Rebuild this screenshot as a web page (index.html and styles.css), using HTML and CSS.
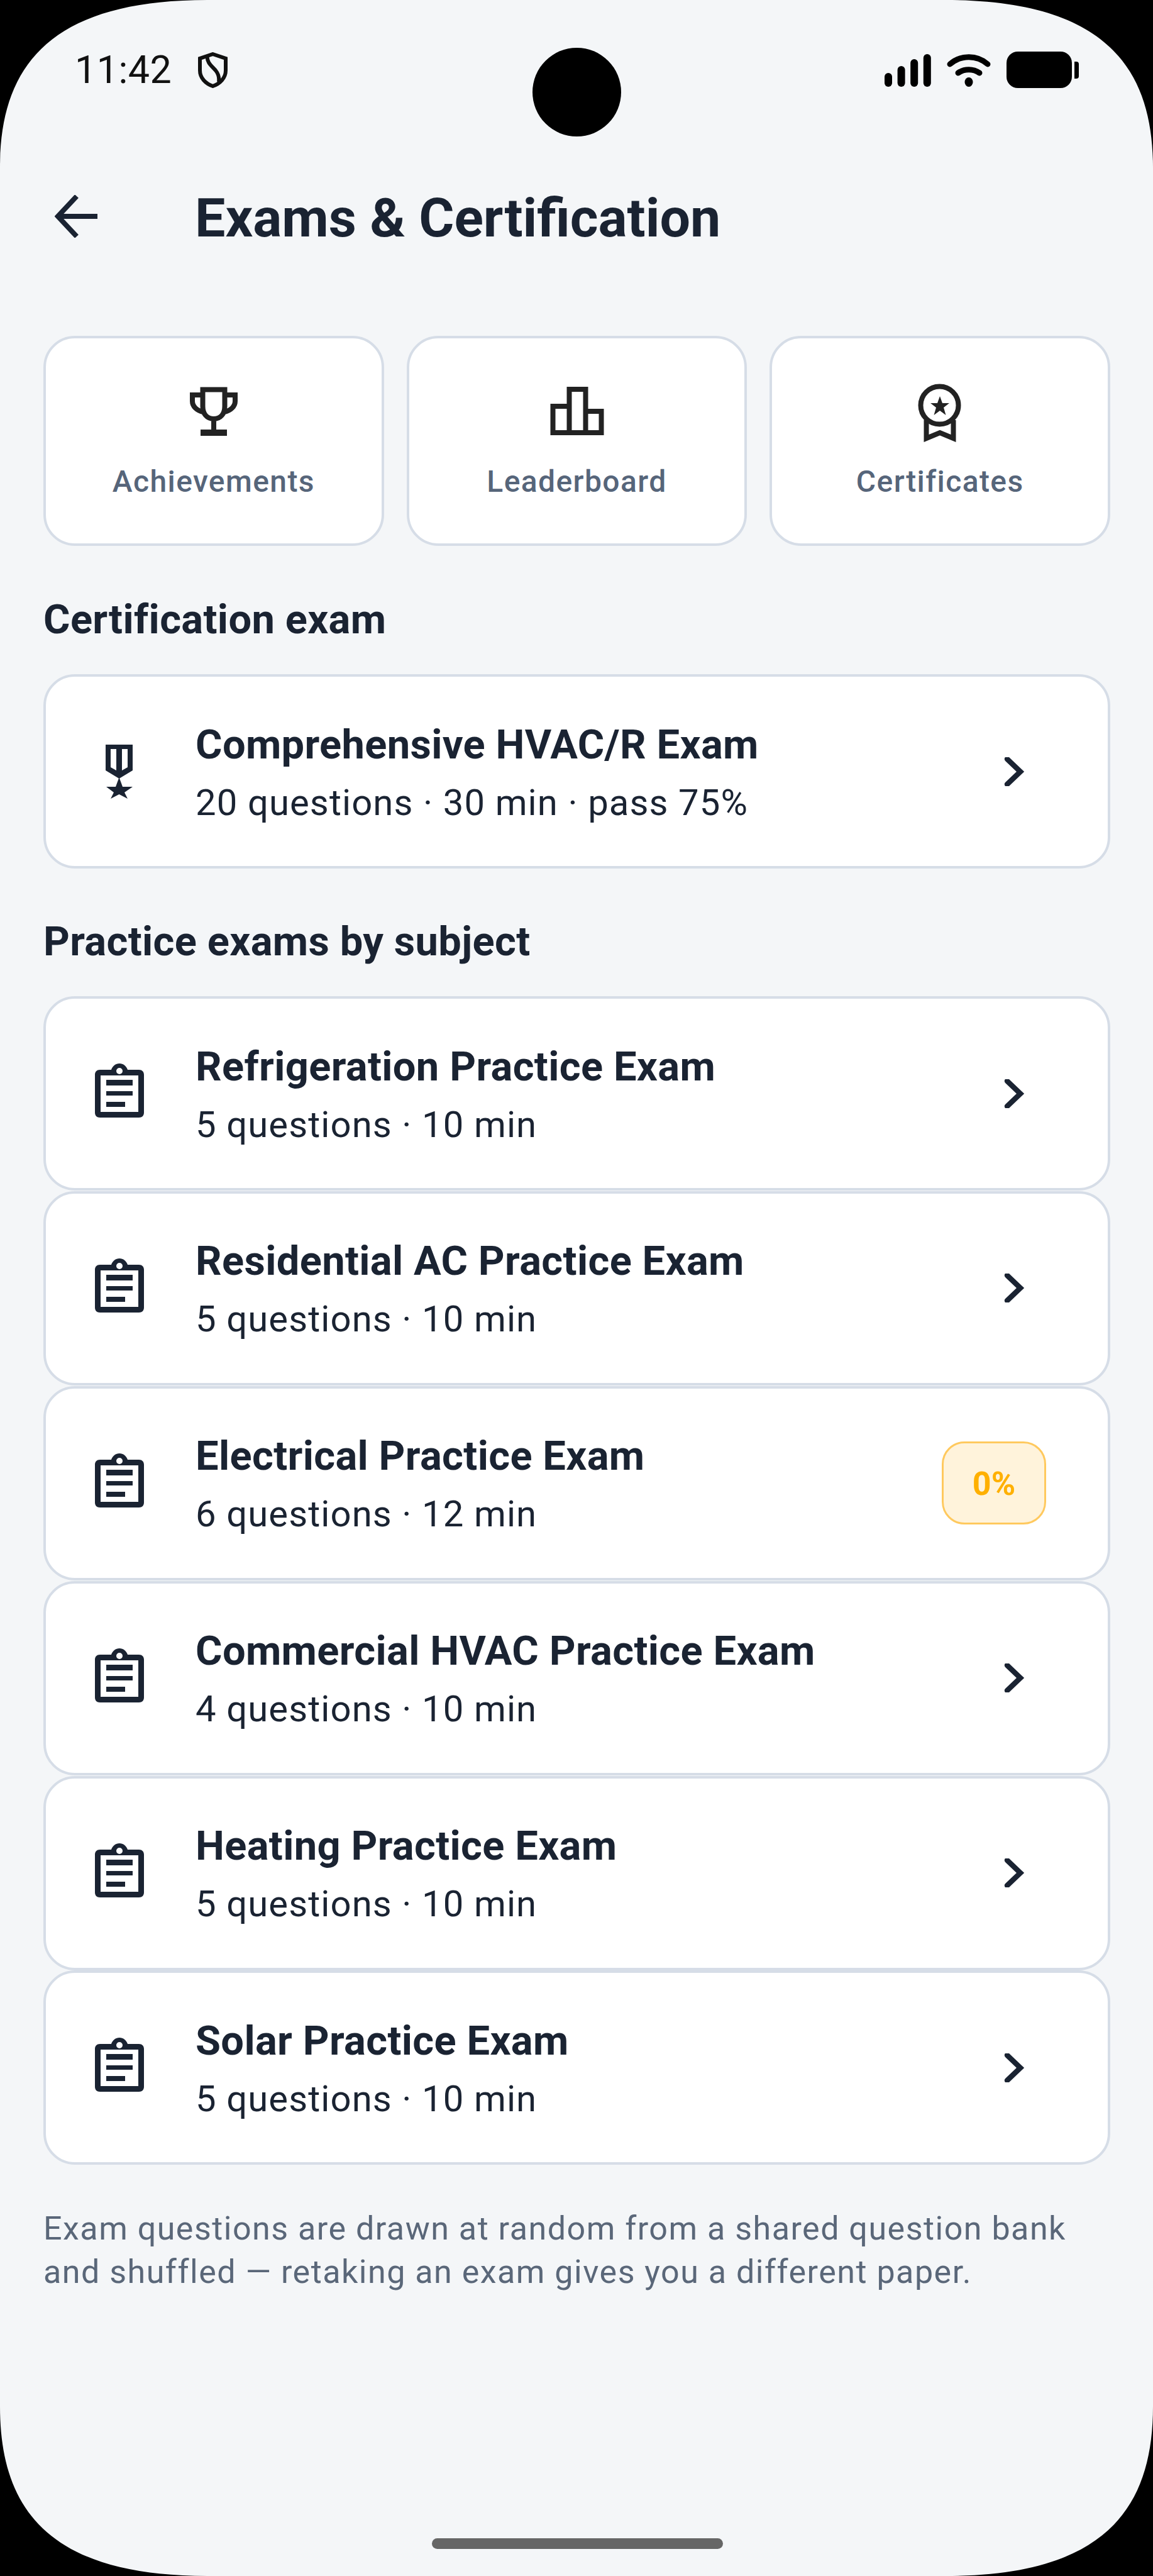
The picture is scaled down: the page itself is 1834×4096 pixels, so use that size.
FILE: index.html
```html
<!DOCTYPE html>
<html lang="en">
<head>
  <meta charset="UTF-8" />
  <title>Exams &amp; Certification</title>
  <link rel="stylesheet" href="styles.css">
</head>
<body>

<svg width="0" height="0" class="defs">
  <symbol id="clip" viewBox="0 0 78 86">
    <path fill-rule="evenodd" d="M8 10H26C28 4 33 0 39 0S50 4 52 10H70C75 10 78 13 78 18V78C78 83 75 86 70 86H8C3 86 0 83 0 78V18C0 13 3 10 8 10ZM9 19V77H69V19ZM39 7A5 5 0 1 0 39 17A5 5 0 1 0 39 7Z"/>
    <rect x="18" y="26" width="42" height="9"/>
    <rect x="18" y="44" width="42" height="7"/>
    <rect x="18" y="61" width="30" height="8"/>
  </symbol>
  <symbol id="chev" viewBox="0 0 34 46">
    <path d="M6 3L27 23L6 43" fill="none" stroke="currentColor" stroke-width="8.500" stroke-linecap="round"/>
  </symbol>
</svg>

<div class="screen">
  <div class="status">
    <div class="status-left">
      <span class="time">11:42</span>
      <svg class="shield" viewBox="0 0 47 57"><path d="M23.500 3L44 10V29C44 41 35 50 23.500 54C12 50 3 41 3 29V10Z M15 5C13 16 22 22 28 29C32 34 34 40 33 47" fill="none" stroke="#111" stroke-width="6"/></svg>
    </div>
    <div class="status-right">
      <svg class="signal" viewBox="0 0 74 52">
        <rect x="0" y="30" width="12" height="22" rx="6"/>
        <rect x="20.600" y="19" width="12" height="33" rx="6"/>
        <rect x="41.200" y="8" width="12" height="44" rx="6"/>
        <rect x="61.800" y="0" width="12" height="52" rx="6"/>
      </svg>
      <svg class="wifi" viewBox="0 0 70 53">
        <path d="M5 17C22 2 48 2 65 17" fill="none" stroke="#000" stroke-width="9" stroke-linecap="round"/>
        <path d="M18 31C28 24 42 24 52 31" fill="none" stroke="#000" stroke-width="9" stroke-linecap="round"/>
        <ellipse cx="35" cy="45.500" rx="6.500" ry="7.500"/>
      </svg>
      <div class="battery"></div>
      <div class="battery-tip"></div>
    </div>
  </div>

  <div class="topbar">
    <svg class="back" viewBox="0 0 68 68"><path d="M68 34H6M35 2L5 34L35 66" fill="none" stroke="#1a2332" stroke-width="8"/></svg>
    <h1>Exams &amp; Certification</h1>
  </div>

  <div class="chips">
    <div class="chip">
      <svg class="chip-icon" viewBox="0 0 96 96"><path d="M30.500 11.500H65.500V38C65.500 50 59 58 48 58S30.500 50 30.500 38ZM30 20H14V30C14 38 21 45 31 47M66 20H82V30C82 38 75 45 65 47M48 58V80" fill="none" stroke="#222" stroke-width="8"/><path d="M27 80H69" fill="none" stroke="#222" stroke-width="10"/></svg>
      <span>Achievements</span>
    </div>
    <div class="chip">
      <svg class="chip-icon" viewBox="0 0 96 96"><path d="M10.500 80V38H36.500V80ZM36.500 80V11H62.500V80ZM62.500 80V46H87.500V80Z" fill="none" stroke="#222" stroke-width="8"/></svg>
      <span>Leaderboard</span>
    </div>
    <div class="chip">
      <svg class="chip-icon" viewBox="0 0 96 96"><circle cx="47.500" cy="36.500" r="30" fill="none" stroke="#222" stroke-width="8"/><path d="M48 22L52 33H63L54 40L57.500 52L48 45L38.500 52L42 40L33 33H44Z" fill="#222"/><path d="M26.500 60V89L48 80L69.500 89V60" fill="none" stroke="#222" stroke-width="8"/></svg>
      <span>Certificates</span>
    </div>
  </div>

  <h2 class="sec-cert">Certification exam</h2>
  <div class="card">
    <div class="card-icon">
      <svg class="medal" viewBox="0 0 43 86"><path fill-rule="evenodd" d="M0 0H43V41L21.500 54L0 41ZM8 7V36L17 41V7ZM26 7V41L35 36V7Z"/><path d="M21.500 52L27 67H43L30 76L35 86L21.500 79L8 86L13 76L1 67H16Z"/></svg>
    </div>
    <div class="card-text">
      <div class="card-title">Comprehensive HVAC/R Exam</div>
      <div class="card-sub">20 questions · 30 min · pass 75%</div>
    </div>
    <svg class="chevron"><use href="#chev"/></svg>
  </div>

  <h2 class="sec-practice">Practice exams by subject</h2>
  <div class="list">
    <div class="card">
      <div class="card-icon"><svg class="clipboard"><use href="#clip"/></svg></div>
      <div class="card-text">
        <div class="card-title">Refrigeration Practice Exam</div>
        <div class="card-sub">5 questions · 10 min</div>
      </div>
      <svg class="chevron"><use href="#chev"/></svg>
    </div>
    <div class="card">
      <div class="card-icon"><svg class="clipboard"><use href="#clip"/></svg></div>
      <div class="card-text">
        <div class="card-title">Residential AC Practice Exam</div>
        <div class="card-sub">5 questions · 10 min</div>
      </div>
      <svg class="chevron"><use href="#chev"/></svg>
    </div>
    <div class="card">
      <div class="card-icon"><svg class="clipboard"><use href="#clip"/></svg></div>
      <div class="card-text">
        <div class="card-title">Electrical Practice Exam</div>
        <div class="card-sub">6 questions · 12 min</div>
      </div>
      <div class="badge">0%</div>
    </div>
    <div class="card">
      <div class="card-icon"><svg class="clipboard"><use href="#clip"/></svg></div>
      <div class="card-text">
        <div class="card-title">Commercial HVAC Practice Exam</div>
        <div class="card-sub">4 questions · 10 min</div>
      </div>
      <svg class="chevron"><use href="#chev"/></svg>
    </div>
    <div class="card">
      <div class="card-icon"><svg class="clipboard"><use href="#clip"/></svg></div>
      <div class="card-text">
        <div class="card-title">Heating Practice Exam</div>
        <div class="card-sub">5 questions · 10 min</div>
      </div>
      <svg class="chevron"><use href="#chev"/></svg>
    </div>
    <div class="card">
      <div class="card-icon"><svg class="clipboard"><use href="#clip"/></svg></div>
      <div class="card-text">
        <div class="card-title">Solar Practice Exam</div>
        <div class="card-sub">5 questions · 10 min</div>
      </div>
      <svg class="chevron"><use href="#chev"/></svg>
    </div>
  </div>

  <p class="note">Exam questions are drawn at random from a shared question bank and shuffled — retaking an exam gives you a different paper.</p>

  <div class="home-bar"></div>

  <!-- things that sit on top of the page -->
  <div class="camera"></div>
  <svg class="corners" viewBox="0 0 1834 4096">
    <path d="M0 0H330C77 0 0 107 0 267Z"/>
    <path d="M1834 0H1504C1757 0 1834 107 1834 267Z"/>
    <path d="M0 4096H330C77 4096 0 3989 0 3826Z"/>
    <path d="M1834 4096H1504C1757 4096 1834 3989 1834 3826Z"/>
  </svg>
</div>

</body>
</html>
```

FILE: styles.css
```css
body {
  margin: 0;
  background: #000;
  font-family: Roboto, sans-serif;
  color: #1a2332;
}
.defs {
  position: absolute;
}
.screen {
  position: relative;
  width: 1834px;
  height: 4096px;
  overflow: hidden;
  background: #f4f6f8;
  padding: 0 68px 0 69px;
  box-sizing: border-box;
}
.status {
  display: flex;
  justify-content: space-between;
  align-items: flex-start;
  margin: 0 50px 0 50px;
  padding-top: 82px;
  height: 170px;
  box-sizing: border-box;
}
.status-left {
  display: flex;
  align-items: center;
  gap: 42px;
}
.time {
  font-size: 61px;
  line-height: 58px;
  color: #111;
  letter-spacing: 0.5px;
}
.shield {
  width: 47px;
  height: 57px;
}
.status-right {
  display: flex;
  align-items: flex-start;
}
.signal {
  width: 74px;
  height: 52px;
  margin-top: 4px;
}
.wifi {
  width: 70px;
  height: 53px;
  margin: 3px 25px 0;
}
.battery {
  width: 104px;
  height: 58px;
  border-radius: 18px;
  background: #000;
}
.battery-tip {
  width: 7px;
  height: 27px;
  margin: 16px 0 0 4px;
  border-radius: 0 4px 4px 0;
  background: #000;
}
.topbar {
  display: flex;
  align-items: center;
  margin-top: 140px;
  height: 68px;
}
.back {
  width: 68px;
  height: 68px;
  margin: 0 155px 0 18px;
}
h1 {
  margin: 5px 0 0;
  font-size: 86px;
  line-height: 68px;
  font-weight: 700;
  color: #1a2332;
}
.chips {
  display: grid;
  grid-template-columns: repeat(3, 1fr);
  gap: 36px;
  margin-top: 156px;
}
.chip {
  height: 334px;
  box-sizing: border-box;
  background: #fff;
  border: 4px solid #d6dde7;
  border-radius: 50px;
  display: flex;
  flex-direction: column;
  align-items: center;
  padding-top: 70px;
}
.chip-icon {
  width: 96px;
  height: 96px;
}
.chip span {
  margin-top: 34px;
  font-size: 48px;
  line-height: 56px;
  font-weight: 500;
  letter-spacing: 1.4px;
  color: #56657a;
}
h2 {
  margin: 0;
  font-size: 65px;
  line-height: 74px;
  font-weight: 700;
  letter-spacing: 0.35px;
  color: #1a2332;
}
.sec-cert {
  margin-top: 80px;
  margin-bottom: 50px;
}
.sec-practice {
  margin-top: 79px;
  margin-bottom: 50px;
}
.list {
  display: flex;
  flex-direction: column;
  gap: 0.9px;
}
.card {
  height: 309px;
  box-sizing: border-box;
  background: #fff;
  border: 4px solid #d6dde7;
  border-radius: 50px;
  display: flex;
  align-items: center;
}
.card-icon {
  width: 233px;
  padding-right: 5px;
  display: flex;
  justify-content: center;
  flex: none;
}
.medal {
  width: 43px;
  height: 86px;
  fill: #1a2332;
}
.clipboard {
  width: 78px;
  height: 86px;
  margin-top: -9px;
  fill: #1a2332;
}
.card-text {
  flex: 1;
  margin-top: 3px;
}
.card-title {
  font-size: 65px;
  line-height: 74px;
  font-weight: 700;
  letter-spacing: 0.35px;
}
.card-sub {
  margin-top: 21px;
  font-size: 58px;
  line-height: 68px;
  letter-spacing: 1.1px;
}
.chevron {
  width: 34px;
  height: 46px;
  margin-right: 132px;
  color: #1a2332;
}
.badge {
  width: 166px;
  height: 132px;
  box-sizing: border-box;
  margin-right: 98px;
  padding-top: 2px;
  background: #fff3db;
  border: 3px solid #ffc95e;
  border-radius: 36px;
  display: flex;
  align-items: center;
  justify-content: center;
  font-size: 52px;
  font-weight: 700;
  color: #ffb000;
}
.note {
  margin: 67px 0 0;
  font-size: 52px;
  line-height: 69px;
  letter-spacing: 1.5px;
  color: #5a6779;
}
.home-bar {
  position: absolute;
  left: 687px;
  top: 4036px;
  width: 463px;
  height: 17px;
  border-radius: 9px;
  background: #666;
}
.camera {
  position: absolute;
  left: 847px;
  top: 76px;
  width: 141px;
  height: 141px;
  border-radius: 50%;
  background: #000;
}
.corners {
  position: absolute;
  left: 0;
  top: 0;
  width: 1834px;
  height: 4096px;
}
```
